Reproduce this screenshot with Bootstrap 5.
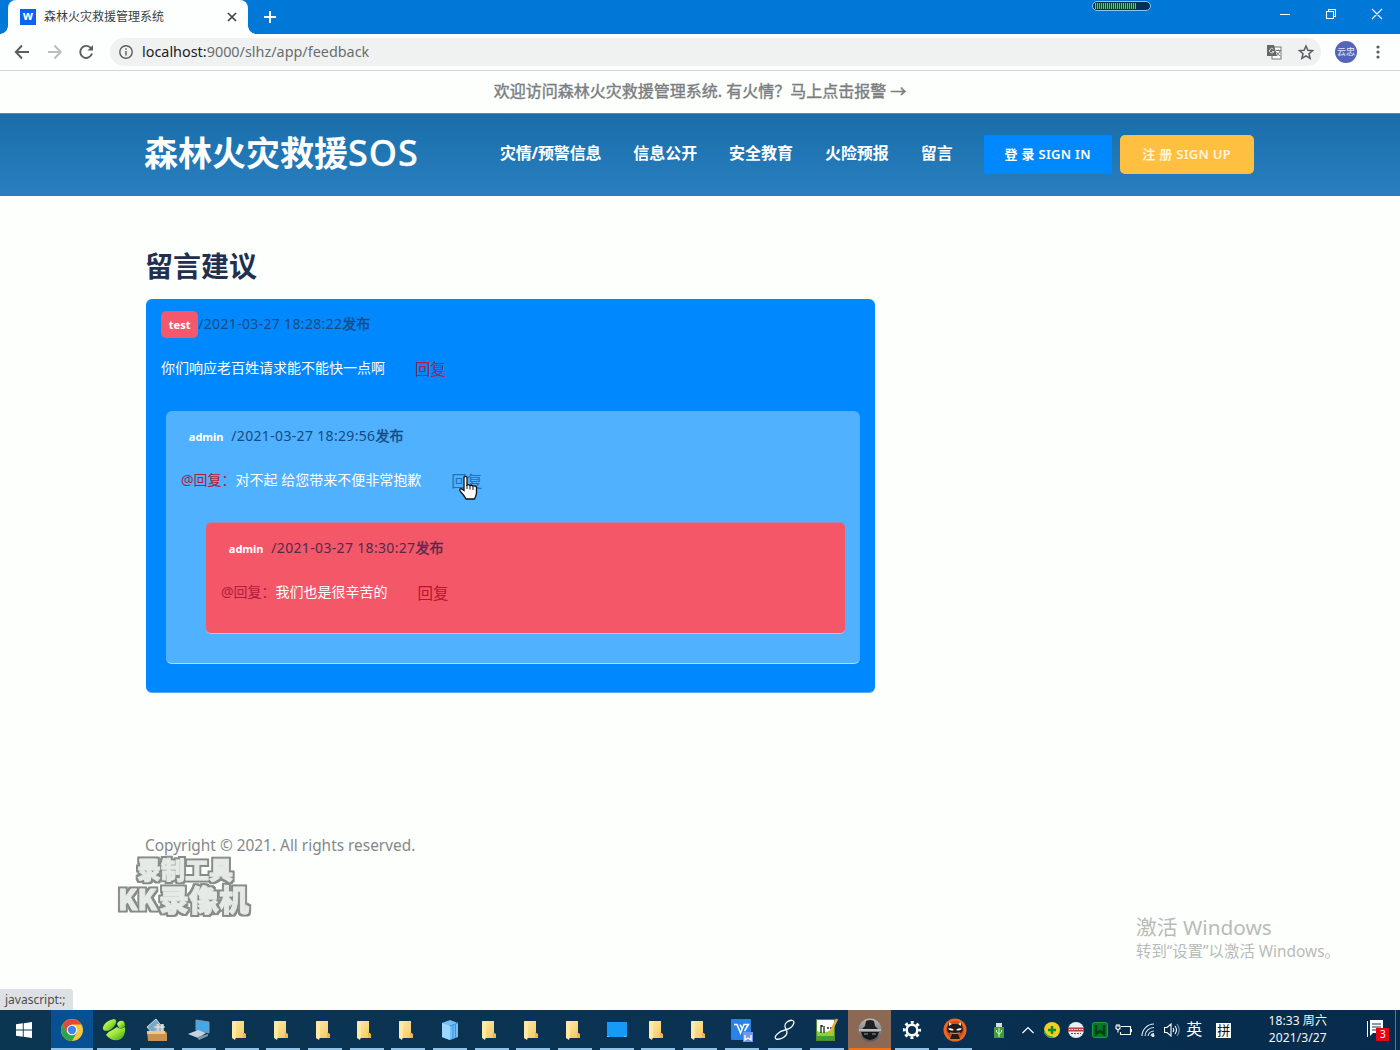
<!DOCTYPE html>
<html lang="zh-CN">
<head>
<meta charset="utf-8">
<title>森林火灾救援管理系统</title>
<link href="https://cdn.jsdelivr.net/npm/bootstrap@5.3.0/dist/css/bootstrap.min.css" rel="stylesheet">
<script src="https://cdn.jsdelivr.net/npm/bootstrap@5.3.0/dist/js/bootstrap.bundle.min.js"></script>
<style>
body{width:1400px;height:1050px;overflow:hidden;background:#fcfffc;font-family:"Noto Sans","Noto Sans CJK SC",sans-serif;font-size:14px;line-height:20px;color:#212529;white-space:nowrap}
svg{display:block;flex:none}
.tabstrip{height:34px;background:#0078d7}
.browser-tab{width:240px;margin-left:8px;background:#fcfffd;border-radius:8px 8px 0 0;padding:0 11px 0 12px;font-size:12px;color:#3c4043}
.tab-foot-l{position:absolute;left:0;top:26px;width:8px;height:8px;background:radial-gradient(circle at 0 0,#0078d7 7.5px,#fcfffd 8px)}
.tab-foot-r{width:8px;height:8px;background:radial-gradient(circle at 100% 0,#0078d7 7.5px,#fcfffd 8px)}
.favicon{width:16px;height:16px;background:#0b62f5;color:#fff;font:bold 12px/14px "Open Sans",sans-serif;text-align:center}
.meter{position:absolute;left:1092px;top:1px;width:59px;height:10px;border:1px solid #8cc4ee;border-radius:5px;background:#05305a;padding:1px 2px}
.meter-fill{width:41px;height:6px;background:repeating-linear-gradient(90deg,#37d67a 0 1px,#08502c 1px 2px)}
.toolbar{height:37px;border-bottom:1px solid #d4d6d5;background:#fcfffd;padding-left:14px}
.omnibox{width:1211px;height:28px;margin-left:16px;background:#f0f2f2;border-radius:14px;padding:0 7px 0 9px;font-size:14.4px;color:#6a6d70}
.omnibox .url{margin-left:9px}
.omnibox b{font-weight:400;color:#202124}
.avatar{width:22px;height:22px;background:#5563b9;color:#e8eaff;font-size:9px;line-height:21px;text-align:center}
.welcome{height:42px;font-size:16px;color:#7b7e82;line-height:41px;-webkit-text-stroke:.4px #7b7e82}
.hero{height:83px;background:linear-gradient(#186da9,#2a7fc0);border-top:1px solid #4e8db7;color:#fff;padding:0 0 1px 144px}
.brand{font-size:34px;font-weight:700;width:356px;line-height:78px;padding-bottom:4px}
.brand span{font-weight:500;font-size:36px;letter-spacing:1px;-webkit-text-stroke:.3px #fff}
.menu{font-size:16px;font-weight:700;gap:32px;padding-bottom:4px;letter-spacing:-.04px}
.menu a:first-child{letter-spacing:-.2px}
.menu a,.btn-sign{color:#fff;text-decoration:none}
.btn-sign{height:39px;font-size:13px;font-weight:600;line-height:38px;padding:0;border:0;text-align:center;border-radius:4px}
.sign-in{width:128px;background:#0089ff;margin-left:31px;border-radius:2px;letter-spacing:.3px}
.sign-up{width:134px;background:#ffbf40;margin-left:8px;color:#fff4d8;border-radius:5px;letter-spacing:.3px}
.page{height:814px;padding:50px 0 0 145px}
.page h1{font-size:28px;font-weight:700;color:#22304f;line-height:40px;margin:0 0 13px}
.thread{width:729px;margin-left:1px;background:#0089ff;border-radius:6px;height:394px;border-bottom:1px solid #4fa9f5}
.post{padding:12px 15px 0}
.post-head{height:27px;color:#1d4a80}
.post-text{height:20px;margin-top:20px;color:#fff}
.reply-1{margin:33px 0 0 5px;height:253px;background:#4fb1ff;border-radius:6px;border-bottom:1px solid #b2dcfb}
.reply-2{margin:32px 0 0 25px;height:112px;background:#f35768;border-radius:5px;border-top:1px solid #a78bae;border-bottom:1px solid #f0b0c0}
.reply-1 .post-head{color:#154a80}.reply-2 .post-head{color:#57294b!important}
.stamp{letter-spacing:.33px;padding-bottom:2px}
.stamp i{font-style:normal;letter-spacing:0;-webkit-text-stroke:.4px}
.who{height:27px;font:bold 11px/28px "Noto Sans",sans-serif;color:#fff;padding:0 7.8px;border-radius:5px}
.who-red{background:#f5576c}
.reply-link{color:#b01c4e;font-size:15.5px;text-decoration:none;margin-left:30px;padding-top:1px}
.reply-2 .reply-link{color:#b5162f}
.at{color:#b01c3e}
.copyright{font-size:15.4px;color:#858889;margin-top:143px}
.watermark{position:absolute;left:111px;top:852px}
.activate{position:absolute;left:1136px;top:913px;color:#b8bbb9;font-size:15.4px}
.activate div:first-child{font-size:20.8px;line-height:29px}
.status{position:absolute;left:0;top:989px;width:73px;height:21px;background:#dee1e3;color:#4a4d50;font-size:12px;line-height:21px;padding-left:5px;border-radius:0 3px 0 0}
.cursor{position:absolute;left:458px;top:475px}
.taskbar{height:40px;background:linear-gradient(90deg,#0b3652,#0a3152 60%,#062b4c)}
.app{width:42.5px;height:40px;display:flex;align-items:center;justify-content:center;background:linear-gradient(#91c3e8,#91c3e8) 50% 100%/34px 2px no-repeat}
.app-slim{width:41.7px}
.app-folder{width:41.7px;padding-right:4px;background-position:4px 100%}
.app-on{width:42px;background:linear-gradient(#91c3e8,#91c3e8) 50% 100%/42px 2px no-repeat,#075091}
.app-alert{background:linear-gradient(#f27316,#f27316) 50% 100%/42px 2px no-repeat,#8b6954}
.tray{width:24px;height:40px;display:flex;align-items:center;justify-content:center;color:#fff}
.clock{width:90px;margin-left:17px;font-size:12px;line-height:17px;color:#f4f8fb;text-align:center;padding-bottom:2px;letter-spacing:.1px}
</style>
</head>
<body class="d-flex flex-column position-relative">
<svg width="0" height="0" class="position-absolute"><defs>
<linearGradient id="gf" x2="1" y2="1"><stop stop-color="#ffeaa4"/><stop offset="1" stop-color="#f2c75e"/></linearGradient>
<linearGradient id="gg" x2="1" y2="1"><stop stop-color="#eaff9a"/><stop offset=".5" stop-color="#9be331"/><stop offset="1" stop-color="#2f9f19"/></linearGradient>
<linearGradient id="gs" x2="0" y2="1"><stop stop-color="#bbb"/><stop offset="1" stop-color="#555"/></linearGradient>
<filter id="outline" x="-10%" y="-10%" width="120%" height="120%"><feMorphology in="SourceAlpha" operator="dilate" radius="2" result="fat"/><feFlood flood-color="#858b87"/><feComposite in2="fat" operator="in" result="rim"/><feMerge><feMergeNode in="rim"/><feMergeNode in="SourceGraphic"/></feMerge></filter>
<symbol id="folder" viewBox="0 0 14 20"><path d="M1 1h11v12l2 3v2H1z" fill="url(#gf)"/><path d="M0 1l4 1v15l-1 3-3-2z" fill="#ffe9a8"/><path d="M11 12l3 2v4h-3z" fill="#e9b94a"/></symbol>
</defs></svg>

<header>
  <div class="tabstrip d-flex position-relative">
    <span class="tab-foot-l"></span>
    <div class="browser-tab d-flex align-items-center">
      <span class="favicon">w</span><span class="ms-2 me-auto">森林火灾救援管理系统</span>
      <svg width="10" height="10" viewBox="0 0 10 10" stroke="#3c4043" stroke-width="1.6"><path d="M1 1l8 8M9 1l-8 8"/></svg>
    </div>
    <span class="tab-foot-r align-self-end"></span>
    <svg class="align-self-center ms-2" width="12" height="12" viewBox="0 0 12 12" stroke="#fff" stroke-width="2"><path d="M6 0v12M0 6h12"/></svg>
    <svg class="ms-auto" style="margin-right:17px" width="103" height="28" viewBox="0 0 103 28" fill="none" stroke="#fff" stroke-width="1.1"><path d="M0 14.5h10M46.500 11.500h7v7h-7zM48.500 11.500v-2h7v7h-2M92 9l10 10M102 9l-10 10"/></svg>
    <div class="meter"><div class="meter-fill"></div></div>
  </div>
  <div class="toolbar d-flex align-items-center">
    <svg width="80" height="20" viewBox="0 0 80 20" fill="none" stroke="#5a5d60" stroke-width="1.9"><path d="M15 10H2M8 3.500L1.800 10 8 16.500"/><path stroke="#bcbebe" d="M34 10h12M40.500 3.500L46.700 10l-6.200 6.500"/><path d="M77 6.300A6 6 0 1 0 78 11.500"/><path d="M79 3v5.500h-5.500z" fill="#5a5d60" stroke="none"/></svg>
    <div class="omnibox d-flex align-items-center">
      <svg width="14" height="14" viewBox="0 0 14 14" fill="none" stroke="#5a5d60" stroke-width="1.4"><circle cx="7" cy="7" r="6.200"/><path d="M7 6v4.500M7 3.200v1.600"/></svg>
      <span class="me-auto url"><b>localhost:</b>9000/slhz/app/feedback</span>
      <svg width="48" height="18" viewBox="0 0 48 18"><rect x="6" y="4" width="9" height="12" fill="#fff" stroke="#777"/><path d="M1 2h7l3 11H1z" fill="#65686b"/><path d="M7.500 6.200A2.300 2.300 0 1 0 8 8.500H6" stroke="#ddd" fill="none"/><path d="M10 7.500h5M12.500 6.500v1M14 8q-1 3-3.500 5M10.500 9q1.500 3 4 4" stroke="#777" fill="none"/><path d="M40 3l1.900 4.300 4.600.4-3.500 3 1.100 4.600-4.100-2.500-4.100 2.500 1.100-4.600-3.500-3 4.600-.4z" fill="none" stroke="#5a5d60" stroke-width="1.5"/></svg>
    </div>
    <span class="avatar rounded-circle" style="margin-left:14px">云忠</span>
    <svg style="margin-left:19px" width="4" height="14" fill="#5a5d60"><circle cx="2" cy="2" r="1.600"/><circle cx="2" cy="7" r="1.600"/><circle cx="2" cy="12" r="1.600"/></svg>
  </div>
</header>

<div class="welcome text-center"><span>欢迎访问森林火灾救援管理系统. 有火情？马上点击报警 →</span></div>
<nav class="hero d-flex align-items-center">
  <div class="brand">森林火灾救援<span>SOS</span></div>
  <div class="menu d-flex"><a href="#">灾情/预警信息</a><a href="#">信息公开</a><a href="#">安全教育</a><a href="#">火险预报</a><a href="#">留言</a></div>
  <a class="btn btn-sign sign-in" href="#">登 录 SIGN IN</a>
  <a class="btn btn-sign sign-up" href="#">注 册 SIGN UP</a>
</nav>

<main class="page">
  <h1>留言建议</h1>
  <div class="thread post">
    <div class="post-head d-flex align-items-center"><span class="who who-red">test</span><span class="stamp">/2021-03-27 18:28:22<i>发布</i></span></div>
    <div class="post-text d-flex align-items-center"><span>你们响应老百姓请求能不能快一点啊</span><a class="reply-link" href="#">回复</a></div>
    <div class="reply-1 post">
      <div class="post-head d-flex align-items-center"><span class="who">admin</span><span class="stamp">/2021-03-27 18:29:56<i>发布</i></span></div>
      <div class="post-text d-flex align-items-center"><span><span class="at">@回复：</span>对不起 给您带来不便非常抱歉</span><a class="reply-link" style="color:#1c72bd" href="#">回复</a></div>
      <div class="reply-2 post">
        <div class="post-head d-flex align-items-center"><span class="who">admin</span><span class="stamp">/2021-03-27 18:30:27<i>发布</i></span></div>
        <div class="post-text d-flex align-items-center"><span><span class="at">@回复：</span>我们也是很辛苦的</span><a class="reply-link" href="#">回复</a></div>
      </div>
    </div>
  </div>
  <div class="copyright">Copyright © 2021. All rights reserved.</div>
</main>

<svg class="watermark" width="150" height="70" font-family="Noto Sans CJK SC,sans-serif" font-weight="900" fill="#e6eae7" stroke="#e6eae7" stroke-width=".8" stroke-linejoin="round">
  <g filter="url(#outline)"><text x="26" y="27" font-size="24">录制工具</text><text x="7" y="58" font-size="28" textLength="39" lengthAdjust="spacingAndGlyphs">KK</text><text x="48" y="59" font-size="30">录像机</text></g>
</svg>
<div class="activate"><div>激活 Windows</div><div>转到“设置”以激活 Windows。</div></div>
<div class="status">javascript:;</div>
<svg class="cursor" width="21" height="27" viewBox="0 0 21 27"><path d="M6 2q2-1.500 3 .500V10q1.500-1 3 .600 1.500-1 3 .600 2-.800 3.500 1v6q-.500 3-2 5.800H8Q6 20 2 16q-.800-2.500 1.500-2.300L6 15.500z" fill="#fff" stroke="#111" stroke-width="1.300"/><path d="M9 10v4M12 11v3.500M15 12v3" stroke="#111"/></svg>

<footer class="taskbar d-flex align-items-center">
  <svg style="margin:0 27px 0 16px" width="16" height="16" viewBox="0 0 16 16" fill="#fff"><path d="M0 2.300L6.800 1.300V7.500H0zM7.700 1.200L16 0v7.500H7.700zM0 8.400h6.800v6.300L0 13.700zM7.700 8.400H16V16l-8.300-1.200z"/></svg>
  <div class="app app-on" style="margin-left:-8px"><svg width="22" height="22" viewBox="-11 -11 22 22"><circle r="11" fill="#f8c83c"/><path d="M-9.500-5.500A11 11 0 0 1 9.500-5.500H0L-4.800 2.700z" fill="#e04a3c"/><path d="M-9.500-5.500A11 11 0 0 0 0 11L4.700 2.700-4.800 2.700z" fill="#2ea350"/><circle r="5.200" fill="#fff"/><circle r="4.200" fill="#4284ee"/></svg></div>
  <div class="app"><svg width="24" height="22" viewBox="0 0 24 22" fill="url(#gg)"><path d="M1 8Q3 2 12 0q4 1 1 6-3 5-8 6-5 0-4-4z"/><path d="M15 5q2-4 6-3 2 1 2 5-2 3-6 2z"/><path d="M4 16q3-4 8-6l3-2q3 3 8 0 1 8-4 12-8 4-15-4z"/></svg></div>
  <div class="app"><svg width="22" height="24" viewBox="0 0 22 24"><path d="M1 9L10 1l6 8-9 7z" fill="#76a9c8" stroke="#cde1e9"/><path d="M10 6h8v10h-9z" fill="#a8b5bb"/><path d="M8 9h11M12 6v8M16 6v8" stroke="#eee"/><path d="M1 13h18l2 2v8H2z" fill="#c99252"/><path d="M1 13h18v3H1z" fill="#f2c589"/></svg></div>
  <div class="app"><svg width="24" height="22" viewBox="0 0 24 22"><path d="M9 1l13 2v11L9 11z" fill="#42a9e9" stroke="#8298a8"/><path d="M1 15l10-4 8 3-8 5z" fill="#c2d4df"/><path d="M10 18l11-3v2l-9 4z" fill="#7897aa"/></svg></div>
  <div class="app app-folder"><svg width="14" height="20"><use href="#folder"/></svg></div>
  <div class="app app-folder"><svg width="14" height="20"><use href="#folder"/></svg></div>
  <div class="app app-folder"><svg width="14" height="20"><use href="#folder"/></svg></div>
  <div class="app app-folder"><svg width="14" height="20"><use href="#folder"/></svg></div>
  <div class="app app-folder"><svg width="14" height="20"><use href="#folder"/></svg></div>
  <div class="app app-slim"><svg width="18" height="20" viewBox="0 0 18 20"><path d="M1 3l8-3 8 3v14l-8 3-8-3z" fill="#6fc0fa"/><path d="M1 3l8 3v14l-8-3z" fill="#9bd8ff"/><path d="M9 6l8-3M12 5v14M14.500 4v14" stroke="#3c91d8"/></svg></div>
  <div class="app app-folder"><svg width="14" height="20"><use href="#folder"/></svg></div>
  <div class="app app-folder"><svg width="14" height="20"><use href="#folder"/></svg></div>
  <div class="app app-folder"><svg width="14" height="20"><use href="#folder"/></svg></div>
  <div class="app app-slim"><svg width="22" height="16"><path d="M1 0h20v15H1z" fill="#159bf7"/><path d="M1 14.500h20" stroke="#75c4fa" stroke-dasharray="2 15 2"/></svg></div>
  <div class="app app-folder"><svg width="14" height="20"><use href="#folder"/></svg></div>
  <div class="app app-folder"><svg width="14" height="20"><use href="#folder"/></svg></div>
  <div class="app"><svg width="24" height="24" viewBox="0 0 24 24"><rect x="1" y="1" width="20" height="21" rx="1" fill="#2b82e6"/><path d="M4 6.500h3l3.500 8.500L14 6.500h4.500L14.500 13M10 6.500l2 4" fill="none" stroke="#fff" stroke-width="1.500"/><rect x="13" y="14" width="10" height="10" fill="#7295ed"/><path d="M15 17v5l3-2 3 2v-5" fill="none" stroke="#fff" stroke-width="1.400"/></svg></div>
  <div class="app"><svg width="22" height="22" viewBox="0 0 22 22" fill="none" stroke="#fff" stroke-width="1.300"><path d="M19 6C22 1 17 0 13 3 8 7 13 10 13 13c0 5-7 8-11 7-3-2 3-8 9-9 4-1 7-3 8-5"/></svg></div>
  <div class="app"><svg width="24" height="24" viewBox="0 0 24 24"><rect x="1.500" y="1.500" width="18" height="21" fill="#fff" stroke="#528a2c"/><path d="M2 13q8 4 17-3v12H2z" fill="#85d434"/><path d="M2 18h17v4H2z" fill="#41a129"/><path d="M6 7v8M6 8h2M9 8v7M12 10h2M15 10h2" stroke="#222" stroke-width="1.300"/><path d="M22 1L16 13l-1 4" stroke="#e7ad37" stroke-width="2.500" fill="none"/></svg></div>
  <div class="app app-alert"><svg width="24" height="24" viewBox="-12 -12 24 24"><circle r="11.500" fill="url(#gs)"/><path d="M-8-1h16l-3-3-1-5q-4-2-8 0l-1 5z" fill="#202122"/><path d="M-9 2H9l-2 5q-7 6-14 0z" fill="#171819"/><path d="M-11 0H11" stroke="#ccc" stroke-width="1.500"/><path d="M-6 4h4M2 4h4" stroke="#999" stroke-width="1.200"/></svg></div>
  <div class="app"><svg width="20" height="20" viewBox="-10 -10 20 20" fill="none" stroke="#fff"><circle r="5.300" stroke-width="2.500"/><circle r="7.700" stroke-width="2.800" stroke-dasharray="3 3.048" stroke-dashoffset="1.500"/></svg></div>
  <div class="app"><svg width="24" height="24" viewBox="-12 -12 24 24"><circle r="11.500" fill="#ed671f"/><circle r="9" fill="#c9501a"/><path d="M-6-8l3 2h6l3-2 2 7q0 4-5 5l2 5h-10l2-5q-5-1-5-5z" fill="#231b19"/><path d="M-6-8l3 2-3 2zM6-8L3-6l3 2z" fill="#ddd"/><path d="M-7-1.500q4-1 6 1.500-4 1.500-6-1.500zM7-1.500q-4-1-6 1.500 4 1.500 6-1.500z" fill="#fff"/><path d="M-5 3Q0 4 5 3" stroke="#ce9d78" fill="none"/></svg></div>

  <div class="tray" style="margin-left:11px"><svg width="10" height="15"><path d="M2 0h6v4H2z" fill="#ddd"/><path d="M0 4h10v11H0z" fill="#439d34"/><path d="M5 5v9M2.500 7v2L5 11l2.500-2V7" stroke="#dff5d8" fill="none"/></svg></div>
  <div class="tray" style="margin-left:5px"><svg width="12" height="8" fill="none" stroke="#fff" stroke-width="1.200"><path d="M.5 7L6 1.500 11.500 7"/></svg></div>
  <div class="tray"><svg width="16" height="16"><circle cx="8" cy="8" r="8" fill="#f1cf22"/><path d="M0 8a8 8 0 0 0 9 7" stroke="#36a83a" fill="none" stroke-width="1.500"/><path d="M8 4v8M4 8h8" stroke="#19882a" stroke-width="2.500"/></svg></div>
  <div class="tray"><svg width="16" height="16"><circle cx="8" cy="8" r="8" fill="#eee"/><path d="M0 5.500h16v4H0z" fill="#b83e43"/><path d="M1 7.500h14" stroke="#fff" stroke-dasharray="1.500 1"/><path d="M3 11.500h10" stroke="#555" stroke-dasharray="2 1"/></svg></div>
  <div class="tray"><svg width="16" height="16"><rect x=".5" y=".5" width="15" height="15" rx="2" fill="#05772a" stroke="#19a13e"/><path d="M4 3v9l4-3 4 3V3" fill="none" stroke="#023e18" stroke-width="2.500"/></svg></div>
  <div class="tray"><svg width="17" height="14" fill="none" stroke="#fff" stroke-width="1.100"><path d="M6 3.500h9.500v8H5.500V9M16.500 6v3M1 3h4v2.500q-2 2-4 0zM2 3V1M4 3V1M3 6.500v3"/></svg></div>
  <div class="tray"><svg width="14" height="14" fill="none" stroke="#dfeaf2" stroke-width="1.100"><path d="M1 13A12 12 0 0 1 13 1M4 13A9 9 0 0 1 13 4.500M7 13a6 6 0 0 1 6-5M10 13a3 3 0 0 1 3-2.500"/><circle cx="12" cy="12.500" r="1" fill="#fff"/></svg></div>
  <div class="tray"><svg width="16" height="14" fill="none" stroke="#fff" stroke-width="1.100"><path d="M.5 4.500h2.500L7 1v12L3 9.500H.5zM9 5q1.500 2 0 4M11 3q3 4 0 8"/><path stroke="#8195a8" d="M13 1q4.500 6 0 12"/></svg></div>
  <div class="tray" style="font-size:16px;width:21px;padding-bottom:2px">英</div>
  <div class="tray" style="margin-left:7px"><span style="background:#fff;color:#111;width:15px;height:15px;font-size:13px;line-height:14px;text-align:center">拼</span></div>
  <div class="clock">18:33 周六<br>2021/3/27</div>
  <svg class="ms-auto" width="24" height="22"><path d="M4 1h13v13H4z" fill="#fff"/><path d="M1.500 2v16" stroke="#fff"/><path d="M6 5h9M6 8h9M6 11h5" stroke="#17324f"/><path d="M4 13h4l-4 4z" fill="#fff"/><rect x="10" y="9" width="13" height="13" fill="#e30613"/><text x="14" y="19" fill="#fff" font-size="10">3</text></svg>
  <span style="width:1px;height:40px;background:#5a7590;margin:0 4px 0 5px"></span>
</footer>
</body>
</html>
